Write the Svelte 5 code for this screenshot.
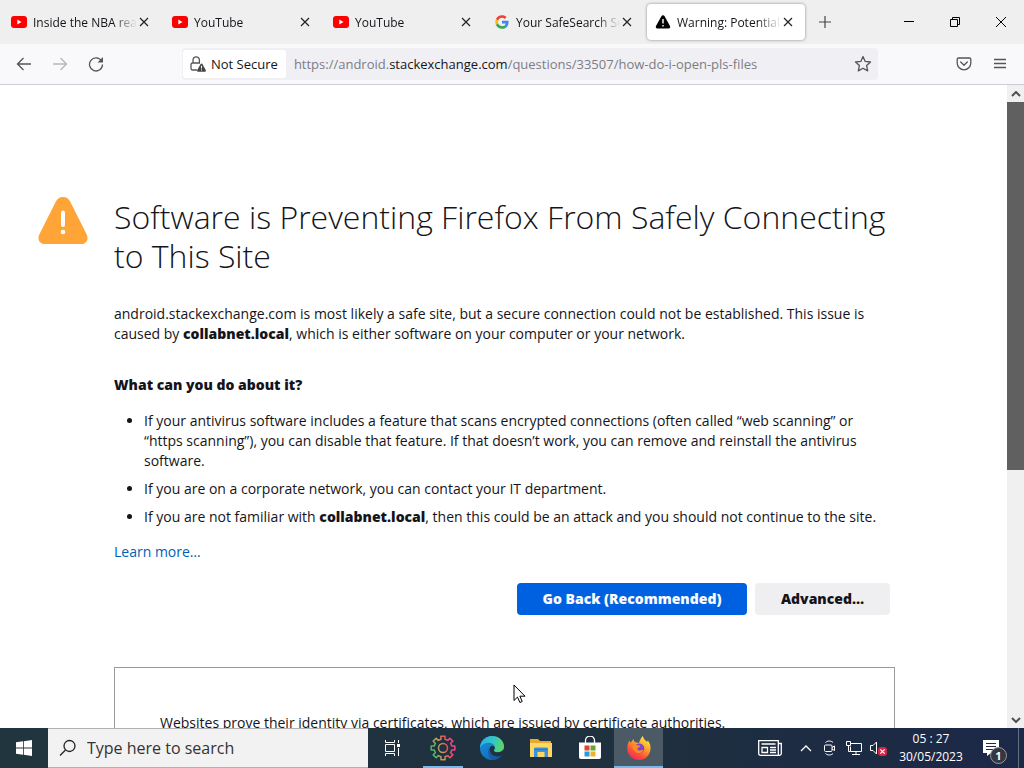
<script lang="ts">
  interface Tab {
    title: string;
    icon: 'youtube' | 'google' | 'warning';
  }

  const tabs: Tab[] = [
    { title: 'Inside the NBA reacts to', icon: 'youtube' },
    { title: 'YouTube', icon: 'youtube' },
    { title: 'YouTube', icon: 'youtube' },
    { title: 'Your SafeSearch Setting', icon: 'google' },
    { title: 'Warning: Potential Security Risk', icon: 'warning' }
  ];

  let active = $state(4);
  let search = $state('');

  // outline of the settings cog, eight teeth around (13, 13)
  function cogPath(): string {
    const points: string[] = [];
    for (let i = 0; i < 8; i++) {
      for (const [offset, radius] of [[-13, 9], [-10, 12], [10, 12], [13, 9]]) {
        const angle = ((i * 45 + offset) * Math.PI) / 180;
        points.push(`${(13 + radius * Math.sin(angle)).toFixed(2)} ${(13 - radius * Math.cos(angle)).toFixed(2)}`);
      }
    }
    return `M${points.join('L')}Z`;
  }
</script>

<div class="desktop">
  <header class="tab-strip">
    <div class="tabs">
      {#each tabs as tab, i}
        <div class="tab" class:active={active === i}>
          <button class="tab-main" onclick={() => (active = i)}>
            {#if tab.icon === 'youtube'}
              <svg width="16" height="16" viewBox="0 0 16 16">
                <rect x="0" y="2" width="16" height="12" rx="3" fill="#f00" />
                <path d="M6.3 5.6v4.8L10.5 8z" fill="#fff" />
              </svg>
            {:else if tab.icon === 'google'}
              <svg width="16" height="16" viewBox="-4 -4 56 56">
                <path fill="#ea4335" d="M24 9.5c3.5 0 6.7 1.2 9.2 3.6l6.9-6.9C35.9 2.4 30.5 0 24 0 14.6 0 6.5 5.4 2.6 13.2l8 6.2C12.4 13.7 17.7 9.5 24 9.5z" />
                <path fill="#4285f4" d="M47 24.5c0-1.6-.2-3.1-.4-4.5H24v9h12.9c-.6 3-2.2 5.5-4.7 7.2l7.700 6C44.400 38 47 31.800 47 24.500z" />
                <path fill="#fbbc05" d="M10.500 28.600A14.500 14.500 0 0 1 10.500 19.400l-8-6.200a24 24 0 0 0 0 21.600z" />
                <path fill="#34a853" d="M24 48c6.500 0 11.900-2.100 15.900-5.800l-7.700-6c-2.200 1.500-4.900 2.300-8.200 2.300-6.300 0-11.600-4.200-13.500-9.900l-8 6.200C6.500 42.600 14.600 48 24 48z" />
              </svg>
            {:else}
              <svg width="16" height="16" viewBox="0 0 16 16">
                <path d="M8 1.200c.8 0 1.300.4 1.600 1l5.400 9.800c.6 1.200 0 2.500-1.400 2.500H2.400C1 14.500.4 13.200 1 12l5.400-9.800c.3-.6.8-1 1.600-1z" fill="#000" />
                <path d="M8 5v4.500M8 11v1.500" stroke="#fff" stroke-width="1.4" />
              </svg>
            {/if}
            <span class="tab-title">{tab.title}</span>
          </button>
          <button class="tab-close" aria-label="Close tab">
            <svg width="10" height="10" viewBox="0 0 10 10">
              <path d="M1 1l8 8M9 1L1 9" stroke="#222" stroke-width="1.2" />
            </svg>
          </button>
        </div>
      {/each}
    </div>
    <button class="new-tab" aria-label="New tab">
      <svg width="12" height="12" viewBox="0 0 12 12">
        <path d="M6 0v12M0 6h12" stroke="#444" stroke-width="1.2" />
      </svg>
    </button>
    <div class="window-buttons">
      <button aria-label="Minimize">
        <svg width="10" height="10" viewBox="0 0 10 10"><path d="M0 4.5h10" stroke="#000" /></svg>
      </button>
      <button aria-label="Restore">
        <svg width="10" height="10" viewBox="0 0 10 10">
          <path d="M.5 2.5h7v7h-7zM2.5 2V.5h7v7H8" fill="none" stroke="#000" />
        </svg>
      </button>
      <button aria-label="Close">
        <svg width="10" height="10" viewBox="0 0 10 10"><path d="M0 0l10 10M10 0L0 10" stroke="#000" /></svg>
      </button>
    </div>
  </header>

  <nav class="toolbar">
    <button aria-label="Back">
      <svg width="16" height="16" viewBox="0 0 16 16">
        <path d="M15 8H1.5M7.5 2L1.5 8l6 6" class="line" />
      </svg>
    </button>
    <button aria-label="Forward" disabled>
      <svg width="16" height="16" viewBox="0 0 16 16">
        <path d="M1 8h13.5M8.5 2l6 6-6 6" class="line" />
      </svg>
    </button>
    <button aria-label="Reload">
      <svg width="16" height="16" viewBox="0 0 16 16">
        <path d="M13.5 5A6.5 6.5 0 1 0 14.5 8.5" class="line" />
        <path d="M15 1v5.500H9.500z" fill="#555" />
      </svg>
    </button>
    <div class="url-bar">
      <button class="identity">
        <svg width="16" height="16" viewBox="0 0 16 16">
          <path d="M7 14H2.500C1.700 14 1 13.300 1 12.500v-4C1 7.700 1.700 7 2.500 7h7.500M3 7V4a3.200 3.200 0 0 1 6.400 0v3" class="line" />
          <path d="M11.500 7.500c.4 0 .7.200.9.600l3.300 6c.4.800 0 1.600-.8 1.600H8.100c-.8 0-1.200-.8-.8-1.600l3.300-6c.2-.4.500-.6.900-.6z" fill="#444" />
          <path d="M11.500 9.800v2.700M11.500 13.500v1" stroke="#fff" />
        </svg>
        <span>Not Secure</span>
      </button>
      <span class="url">https://android.<b>stackexchange.com</b>/questions/33507/how-do-i-open-pls-files</span>
      <button class="star" aria-label="Bookmark this page">
        <svg width="18" height="18" viewBox="0 0 18 18">
          <path d="M9 1.500l2.200 4.900 5.300.6-3.900 3.600 1.100 5.300L9 13.200l-4.700 2.700 1.100-5.300L1.500 7l5.300-.6z" class="line" stroke-linejoin="round" />
        </svg>
      </button>
    </div>
    <button aria-label="Save to Pocket">
      <svg width="16" height="16" viewBox="0 0 16 16">
        <path d="M2.500 2h11c.8 0 1.300.5 1.300 1.300V7a6.800 6.800 0 0 1-13.600 0V3.300C1.200 2.500 1.700 2 2.500 2zM4.700 6L8 9.200 11.300 6" class="line" stroke-linejoin="round" stroke-linecap="round" />
      </svg>
    </button>
    <button aria-label="Open application menu">
      <svg width="12" height="12" viewBox="0 0 12 12">
        <path d="M0 1.500h12M0 5.500h12M0 9.500h12" class="line" />
      </svg>
    </button>
  </nav>

  <div class="viewport">
    <main>
      <svg class="warning" width="50" height="48" viewBox="0 0 50 48">
        <path d="M25 0c3.200 0 5.500 1.500 7 4.200l16.700 33.300c2.300 4.700-.4 9.500-5.700 9.500H7c-5.300 0-8-4.800-5.700-9.500L18 4.200C19.500 1.500 21.800 0 25 0z" fill="#ffa436" />
        <path d="M25 15.500v12.500" stroke="#fff" stroke-width="4" stroke-linecap="round" />
        <circle cx="25" cy="35" r="2.300" fill="#fff" />
      </svg>
      <div class="content">
        <h1>Software is Preventing Firefox From Safely Connecting to This Site</h1>
        <p class="intro">
          android.stackexchange.com is most likely a safe site, but a secure connection could not be established. This issue is caused by <b>collabnet.local</b>, which is either software on your computer or your network.
        </p>
        <h2>What can you do about it?</h2>
        <ul>
          <li>If your antivirus software includes a feature that scans encrypted connections (often called “web scanning” or “https scanning”), you can disable that feature. If that doesn’t work, you can remove and reinstall the antivirus software.</li>
          <li>If you are on a corporate network, you can contact your IT department.</li>
          <li>If you are not familiar with <b>collabnet.local</b>, then this could be an attack and you should not continue to the site.</li>
        </ul>
        <a href="#learn-more">Learn more…</a>
        <div class="actions">
          <button class="primary">Go Back (Recommended)</button>
          <button>Advanced…</button>
        </div>
        <section class="advanced">
          <p>Websites prove their identity via certificates, which are issued by certificate authorities.</p>
        </section>
      </div>
    </main>
    <div class="scrollbar">
      <button aria-label="Scroll up">
        <svg width="10" height="6" viewBox="0 0 10 6"><path d="M1 5l4-4 4 4" /></svg>
      </button>
      <div class="track"><div class="thumb"></div></div>
      <button aria-label="Scroll down">
        <svg width="10" height="6" viewBox="0 0 10 6"><path d="M1 1l4 4 4-4" /></svg>
      </button>
    </div>
    <svg class="cursor" width="13" height="20" viewBox="0 0 13 20">
      <path d="M1 1v15.500l3.500-3.400 2.400 5.400 2.300-1-2.300-5.300H12z" fill="#fff" stroke="#000" />
    </svg>
  </div>

  <footer class="taskbar">
    <button class="start" aria-label="Start">
      <svg width="16" height="16" viewBox="0 0 16 16">
        <path d="M0 2.300L7 1.300v6.300H0zM7.800 1.200L16 0v7.600H7.800zM0 8.400h7v6.300l-7-1zM7.800 8.400H16V16l-8.200-1.200z" fill="#fff" />
      </svg>
    </button>
    <label class="search">
      <svg width="18" height="18" viewBox="0 0 18 18">
        <circle cx="10.500" cy="7" r="5.500" fill="none" stroke="#222" stroke-width="1.300" />
        <path d="M6.500 11L1 16.500" stroke="#222" stroke-width="1.300" />
      </svg>
      <input type="text" placeholder="Type here to search" aria-label="Type here to search" bind:value={search} />
    </label>
    <button class="app task-view" aria-label="Task View">
      <svg width="18" height="16" viewBox="0 0 18 16" fill="none" stroke="#fff">
        <path d="M1.500 0v2.500h9V0M1.500 16v-2.500h9V16M1.500 4.500h9v7h-9zM14.500 0v3M14.500 8v8" />
        <path d="M13 4h3v3h-3z" fill="#fff" stroke="none" />
      </svg>
    </button>
    <button class="app running" aria-label="Settings">
      <svg width="26" height="26" viewBox="0 0 26 26" fill="none" stroke="url(#cog)" stroke-width="1.500" stroke-linejoin="round">
        <defs>
          <linearGradient id="cog" gradientUnits="userSpaceOnUse" x1="2" y1="16" x2="24" y2="10">
            <stop offset="0" stop-color="#43b66b" />
            <stop offset=".4" stop-color="#c99a5a" />
            <stop offset=".65" stop-color="#f0525e" />
            <stop offset="1" stop-color="#e8458e" />
          </linearGradient>
        </defs>
        <circle cx="13" cy="13" r="4.500" />
        <path d={cogPath()} />
      </svg>
    </button>
    <button class="app" aria-label="Microsoft Edge">
      <svg width="24" height="24" viewBox="0 0 24 24">
        <defs>
          <linearGradient id="edge-top" x1="0" y1=".3" x2="1" y2=".5">
            <stop offset="0" stop-color="#2baee8" />
            <stop offset=".55" stop-color="#35c6c4" />
            <stop offset="1" stop-color="#5cd85a" />
          </linearGradient>
          <linearGradient id="edge-low" x1="0" y1="0" x2=".7" y2="1">
            <stop offset="0" stop-color="#1b93dc" />
            <stop offset="1" stop-color="#1268b8" />
          </linearGradient>
        </defs>
        <circle cx="12" cy="12" r="12" fill="url(#edge-low)" />
        <path d="M0 12C0 5 5.500 0 12 0c7 0 12 5 12 10.300 0 4-3 6-6.200 6-2.300 0-4-.8-4-1.800 0-.6 1-1.300 1-3 0-2.500-2.500-4.700-6-4.700-4.500 0-7.500 2-8.800 5.200z" fill="url(#edge-top)" />
        <path d="M9.500 11.500c-.7 4.500 2.500 9 8 9 2 0 3.700-.7 5-1.500A12 12 0 0 1 13 24c-4-1.500-6.500-7-3.500-12.500z" fill="#164f9a" opacity=".6" />
        <path d="M13.800 14.500c0 1 1.700 1.800 4 1.800 2.400 0 4.700-1 5.700-3l.5 4.700-1.500 1c-1.300.8-3 1.500-5 1.500-5 0-8-3.800-8-7 0-1.500.8-3 2.300-3.700 2 0 3 1 3 2.200 0 1.400-1 1.900-1 2.500z" fill="#20323d" />
      </svg>
    </button>
    <button class="app" aria-label="File Explorer">
      <svg width="22" height="20" viewBox="0 0 22 20">
        <path d="M0 1h8l2 2h11v5H0z" fill="#e9a92c" />
        <path d="M0 5h22v14H0z" fill="#ffd766" />
        <path d="M4 19v-8c0-1 .5-1.500 1.500-1.500h11c1 0 1.500.5 1.500 1.500v8h-3.500v-5h-7v5z" fill="#3b94d9" />
        <path d="M4 11.500h14" stroke="#2878ba" />
      </svg>
    </button>
    <button class="app" aria-label="Microsoft Store">
      <svg width="24" height="24" viewBox="0 0 24 24">
        <path d="M7.500 7V4.500a3.500 3.500 0 0 1 9 0V7" fill="none" stroke="#fff" stroke-width="1.300" />
        <path d="M1 6.500h22V21c0 1.300-.7 2-2 2H3c-1.300 0-2-.7-2-2z" fill="#fff" />
        <path d="M6.500 9.500h5v5h-5z" fill="#d9482b" />
        <path d="M12.500 9.500h5v5h-5z" fill="#6ba52f" />
        <path d="M6.500 15.500h5v5h-5z" fill="#2c9ad8" />
        <path d="M12.500 15.500h5v5h-5z" fill="#f0b429" />
      </svg>
    </button>
    <button class="app running current" aria-label="Firefox">
      <svg width="24" height="24" viewBox="0 0 24 24">
        <defs>
          <linearGradient id="fox" x1=".8" y1="0" x2=".2" y2="1">
            <stop offset="0" stop-color="#fff04a" />
            <stop offset=".35" stop-color="#ffac26" />
            <stop offset=".7" stop-color="#ff5038" />
            <stop offset="1" stop-color="#e82564" />
          </linearGradient>
        </defs>
        <path d="M2.500 4.500c.2 1 .7 1.700 1.200 2.200L6.500 3c.1 1.500.8 2.600 2 3.200L12 7c1-3 2-5.500 4-7 .5 3.500 2.500 4 4 6 .5-.2.600-1 .5-1.700C23 7 23.800 10 23.500 13 23 19.500 18 24 12 24S.5 19.500.3 13C.2 9.500.8 7 2.500 4.500z" fill="url(#fox)" />
        <circle cx="12.300" cy="12.500" r="5" fill="#7b45d6" />
        <path d="M5.500 9c2-.8 4-.5 5 .3 1 .2 2 0 3 .5-.5 1.500-2.500 1.500-3 2.500-.3 1 .3 2 1.500 2.200 2 .3 3-.8 4.500-.3-1.500 3-5 3.800-7.800 2C6 14.500 5 12 5.500 9z" fill="#ff8a25" />
      </svg>
    </button>

    <div class="tray">
      <button class="news" aria-label="News and interests">
        <svg width="24" height="16" viewBox="0 0 24 16" fill="none" stroke="#fff" stroke-width="1.300">
          <path d="M.7.7h19.600v14.600H2.500C1.300 15.300.7 14.500.7 13.500zM20.300 3.500h3v10c0 1.200-.8 1.800-1.800 1.800h-1.200M3.500 4h14M12 7.500h6M12 10h6M12 12.500h6M4 7.500h5.500v5H4z" />
        </svg>
      </button>
      <button aria-label="Show hidden icons">
        <svg width="12" height="8" viewBox="0 0 12 8"><path d="M1 7l5-5 5 5" fill="none" stroke="#fff" stroke-width="1.300" /></svg>
      </button>
      <button aria-label="Meet Now">
        <svg width="14" height="16" viewBox="0 0 14 16" fill="none" stroke="#fff">
          <path d="M2.500 5H8c.6 0 1 .4 1 1v4.500c0 .6-.4 1-1 1H2.500c-.6 0-1-.4-1-1V6c0-.6.4-1 1-1zM9 7.500l2.500-1.500v4.500L9 9M2.500 2.500C4.500.5 8 .5 10 2.500M2.500 13.500c2 2 5.500 2 7.500 0" />
        </svg>
      </button>
      <button aria-label="Network">
        <svg width="16" height="14" viewBox="0 0 16 14" fill="none" stroke="#fff">
          <path d="M4.500 2.500h11v8h-11V5.500M.5.500h4v4h-4zM2.500 4.500v6h2M10 10.500v3M6 13.500h8" />
        </svg>
      </button>
      <button aria-label="Volume muted">
        <svg width="17" height="16" viewBox="0 0 17 16">
          <path d="M.5 5.500H3L6.500 2v12L3 10.500H.5z" fill="none" stroke="#fff" />
          <rect x="8" y="7" width="9" height="9" rx="3" fill="#d32743" />
          <path d="M10.300 9.300l4.400 4.400M14.700 9.300l-4.400 4.400" stroke="#fff" stroke-width="1.200" />
        </svg>
      </button>
      <button class="clock">
        <time>05 : 27</time>
        <time>30/05/2023</time>
      </button>
      <button class="notifications" aria-label="Notifications, 1 new">
        <svg width="18" height="18" viewBox="0 0 18 18">
          <path d="M1 1h16v13H9l-4 3v-3H1z" fill="#fff" />
          <path d="M4 4.500h10M4 7.500h10M4 10.500h7" stroke="#1c2a42" />
        </svg>
        <span class="badge">1</span>
      </button>
    </div>
  </footer>
</div>

<style>
  :global(body) {
    margin: 0;
    overflow: hidden;
  }

  .desktop {
    display: flex;
    flex-direction: column;
    height: 100vh;
    font-family: 'Open Sans', 'Noto Sans', sans-serif;
    font-size: 14px;
    color: #15141a;
    background: #fff;
  }

  svg {
    flex: none;
    display: block;
  }

  button {
    display: flex;
    align-items: center;
    justify-content: center;
    padding: 0;
    border: 0;
    background: none;
    font: inherit;
    color: inherit;
  }

  .tab-strip {
    display: flex;
    flex: none;
    height: 44px;
    background: #efefef;
  }

  .tabs {
    display: flex;
    gap: 3px;
    padding: 4px 0 4px 3px;
  }

  .tab {
    display: flex;
    width: 158px;
    border-radius: 4px;
  }

  .tab.active {
    background: #fff;
    box-shadow: 0 0 3px rgba(0, 0, 0, 0.45);
  }

  .tab-main {
    flex: 1;
    min-width: 0;
    justify-content: flex-start;
    gap: 6px;
    padding-left: 8px;
    font-size: 12px;
  }

  .tab-title {
    flex: 1;
    overflow: hidden;
    white-space: nowrap;
    text-align: left;
    mask-image: linear-gradient(to left, transparent, #000 24px);
  }

  .tab-close {
    width: 14px;
    margin-right: 10px;
  }

  .new-tab {
    width: 40px;
  }

  .window-buttons {
    display: flex;
    margin-left: auto;
  }

  .window-buttons button {
    width: 46px;
  }

  .toolbar {
    display: flex;
    flex: none;
    align-items: center;
    height: 40px;
    padding: 0 6px;
    background: #f9f9fb;
    border-bottom: 1px solid #ccccd2;
  }

  .toolbar > button {
    width: 36px;
    height: 32px;
  }

  .toolbar button:disabled {
    opacity: 0.4;
  }

  .line {
    fill: none;
    stroke: #555;
    stroke-width: 1.3;
  }

  .url-bar {
    display: flex;
    flex: 1;
    align-items: center;
    min-width: 0;
    height: 32px;
    margin: 0 68px;
    border-radius: 4px;
    background: #f0f0f4;
  }

  .identity {
    flex: none;
    gap: 5px;
    height: 28px;
    margin-left: 1px;
    padding: 0 8px 0 7px;
    border-radius: 3px;
    background: #fff;
    font-size: 13px;
  }

  .url {
    flex: 1;
    overflow: hidden;
    padding-left: 8px;
    white-space: nowrap;
    font-size: 13px;
    color: #7c7c84;
  }

  .url b {
    font-weight: 400;
    color: #15141a;
  }

  .star {
    width: 30px;
    height: 30px;
  }

  .viewport {
    position: relative;
    display: flex;
    flex: 1;
    min-height: 0;
    overflow: hidden;
  }

  main {
    display: flex;
    flex: 1;
    align-items: flex-start;
    gap: 26px;
    min-width: 0;
    padding: 112px 112px 0 38px;
  }

  .content {
    flex: 1;
    min-width: 0;
    line-height: 20px;
  }

  h1 {
    margin: 0 0 29px;
    font-size: 32px;
    font-weight: 300;
    line-height: 39px;
  }

  p,
  ul {
    margin: 0;
  }

  .intro {
    padding-right: 5px;
  }

  h2 {
    margin: 31px 0 16px;
    font-size: 14px;
    font-weight: 800;
    line-height: 20px;
  }

  .content b {
    font-weight: 800;
  }

  ul {
    padding-left: 30px;
  }

  li {
    margin-bottom: 8px;
  }

  .content a {
    display: inline-block;
    margin-top: 7px;
    color: #0060b8;
    text-decoration: none;
  }

  .actions {
    display: flex;
    justify-content: flex-end;
    gap: 8px;
    margin: 21px 5px 52px 0;
  }

  .actions button {
    min-width: 135px;
    height: 32px;
    padding: 0 23px;
    border-radius: 4px;
    background: #efeff1;
    font-weight: 800;
  }

  .actions .primary {
    min-width: 230px;
    background: #0061e0;
    color: #fbfbfe;
  }

  .advanced {
    padding: 45px;
    border: 1px solid #99999e;
  }

  .scrollbar {
    display: flex;
    flex: none;
    flex-direction: column;
    width: 17px;
    background: #f0f0f0;
  }

  .scrollbar button {
    height: 17px;
  }

  .scrollbar path {
    fill: none;
    stroke: #505050;
    stroke-width: 2;
  }

  .track {
    flex: 1;
  }

  .thumb {
    height: 60.5%;
    background: #606060;
  }

  .cursor {
    position: absolute;
    left: 513px;
    top: 599px;
  }

  .taskbar {
    display: flex;
    flex: none;
    height: 40px;
    background: linear-gradient(90deg, #20353e, #1f303e 60%, #1b2848);
    color: #fff;
  }

  .start {
    width: 48px;
  }

  .search {
    display: flex;
    align-items: center;
    gap: 10px;
    box-sizing: border-box;
    width: 320px;
    padding-left: 11px;
    border: 1px solid #b0b0b0;
    border-width: 1px 0;
    background: #f2f2f2;
  }

  .search input {
    flex: 1;
    min-width: 0;
    padding: 0;
    border: 0;
    outline: 0;
    background: none;
    font: inherit;
    font-size: 16px;
  }

  .search input::placeholder {
    color: #333;
    opacity: 1;
  }

  .app {
    box-sizing: border-box;
    width: 49px;
  }

  .task-view {
    width: 50px;
  }

  .running {
    background: linear-gradient(#76b9ed, #76b9ed) center bottom / 40px 2px no-repeat;
  }

  .current {
    background: linear-gradient(#76b9ed, #76b9ed) center bottom / 100% 2px no-repeat #4c5a66;
  }

  .tray {
    display: flex;
    margin-left: auto;
    padding-right: 5px;
  }

  .tray button {
    width: 24px;
  }

  .tray .news {
    width: 48px;
  }

  .tray .clock {
    flex-direction: column;
    width: 82px;
    font-size: 12px;
    line-height: 18px;
  }

  .tray .notifications {
    position: relative;
    box-sizing: border-box;
    width: 47px;
    padding-right: 9px;
    border-right: 1px solid #66707f;
  }

  .badge {
    position: absolute;
    right: 11px;
    bottom: 4px;
    width: 15px;
    height: 15px;
    border: 1px solid #999;
    border-radius: 50%;
    background: #333842;
    font-size: 11px;
    font-weight: 700;
    line-height: 15px;
    text-align: center;
  }
</style>
